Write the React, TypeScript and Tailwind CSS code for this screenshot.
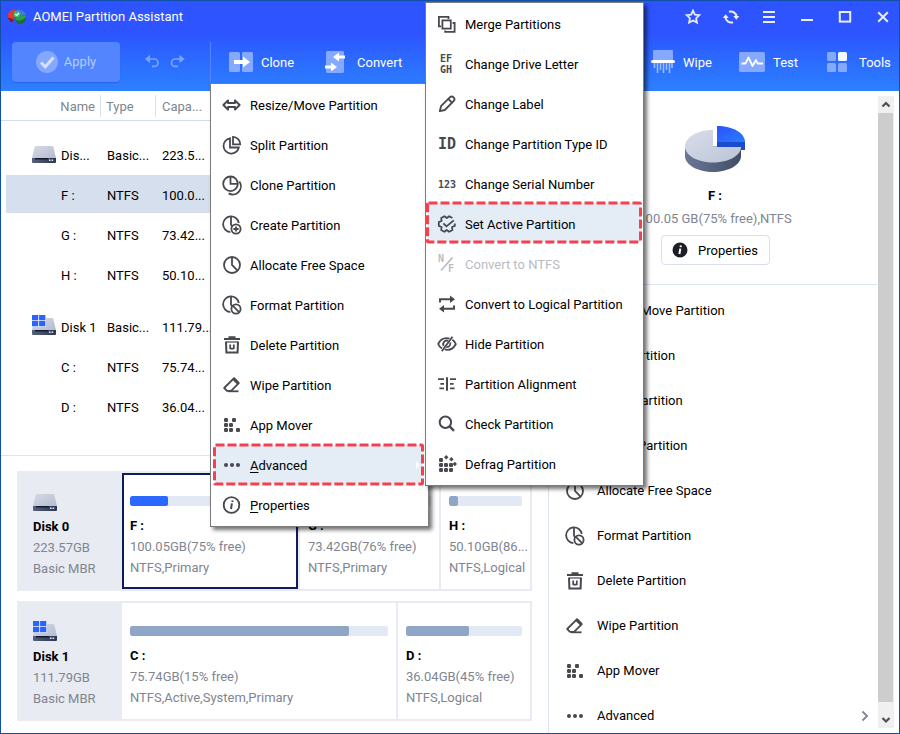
import clsx from "clsx";
import type { ReactNode } from "react";

type MenuEntry = {
  label: string;
  icon: ReactNode;
  mnemonic?: boolean;
  active?: boolean;
  disabled?: boolean;
  arrow?: boolean;
};

type Volume = {
  name: string;
  size: string;
  kind: string;
  used: number;
  selected?: boolean;
};

const Icon = ({ children }: { children: ReactNode }) => (
  <svg
    viewBox="0 0 20 20"
    className="h-5 w-5 shrink-0 overflow-visible"
    fill="none"
    stroke="currentColor"
    strokeWidth="1.8"
    aria-hidden="true"
  >
    {children}
  </svg>
);

const ResizeIcon = () => (
  <Icon>
    <path d="M6 5.4 1.4 10 6 14.6V12h7v2.6l4.6-4.6L13 5.4V8H6Z" strokeWidth="2" strokeLinejoin="round" />
  </Icon>
);

const SplitIcon = () => (
  <Icon>
    <path d="M8 3.3a7.7 7.7 0 1 0 8.8 9.2H8Z" />
    <path d="M11 1.9V9.3h7.2A7.3 7.3 0 0 0 11 1.9Z" />
  </Icon>
);

const ClonePartitionIcon = () => (
  <Icon>
    <circle cx="8.5" cy="8.8" r="7.3" />
    <path d="M8.5 1.5v7.3h7.3" />
    <path d="M17.4 6.6A8.2 8.2 0 0 1 6.6 18.4" />
  </Icon>
);

const CreateIcon = () => (
  <Icon>
    <path d="M16.8 8A7.9 7.9 0 1 0 8.4 17.2" />
    <path d="M9 1.5v8.3l1.5 2" />
    <circle cx="14" cy="14" r="4.6" />
    <path d="M14 11.4v5.2M11.4 14h5.2" />
  </Icon>
);

const AllocateIcon = () => (
  <Icon>
    <circle cx="10" cy="10" r="8" />
    <path d="M10 2v8l5.5 5.6" />
  </Icon>
);

const FormatIcon = () => (
  <Icon>
    <path d="M16.8 8A7.9 7.9 0 1 0 8.4 17.2" />
    <path d="M9 1.5v8.3l1.5 2" />
    <circle cx="14" cy="14" r="4.6" />
    <path d="m10.9 10.9 6.2 6.2" />
  </Icon>
);

const DeleteIcon = () => (
  <Icon>
    <path d="M2 4h16M6.5 2.2h7" strokeWidth="2" />
    <path d="M4 6.6 4.4 17.4h11.2L16 6.6" strokeWidth="2" />
    <path d="M4 7h12" strokeWidth="1.2" />
    <path d="M8.2 9.4v4.6M11.8 9.4v4.6M8.2 13.6h3.6" strokeWidth="1.7" />
  </Icon>
);

const EraserIcon = () => (
  <Icon>
    <path d="M5 15.8 2.2 13 12 3.2l4.8 4.9-7.7 7.7Z" strokeLinejoin="round" />
    <path d="m11.5 3.7 4.8 4.8" strokeWidth="3" />
    <path d="M6 16.3h10.500" />
  </Icon>
);

const dots = (points: number[][], size = 4) =>
  points.map(([x, y]) => (
    <rect
      key={`${x}-${y}`}
      x={x}
      y={y}
      width={size}
      height={size}
      rx="1.2"
      fill="currentColor"
      stroke="none"
    />
  ));

const MoverIcon = () => (
  <Icon>
    {dots([[2, 3], [10, 3], [2, 8], [7, 8], [2, 13], [7, 13], [14, 13]])}
  </Icon>
);

const MoreIcon = () => (
  <Icon>
    <g fill="currentColor" stroke="none">
      <circle cx="4" cy="10" r="2" />
      <circle cx="10" cy="10" r="2" />
      <circle cx="16" cy="10" r="2" />
    </g>
  </Icon>
);

const InfoIcon = () => (
  <Icon>
    <circle cx="9.5" cy="10" r="7.8" />
    <path d="M10.6 5.4 10.3 7M9.9 8.4 9 14" strokeWidth="2" />
  </Icon>
);

const MergeIcon = () => (
  <Icon>
    <path d="M11.5 5V2.9H1.9v9.4H4" />
    <rect x="5.4" y="6.4" width="8.4" height="8.2" />
    <path d="M15.600 9h2v8.900H8.200V16.400" />
  </Icon>
);

const IconText = ({ x, y, size, children }: { x: number; y: number; size: number; children: string }) => (
  <text
    x={x}
    y={y}
    fontSize={size}
    fontWeight="700"
    fill="currentColor"
    stroke="none"
    className="font-['DejaVu_Sans_Mono',monospace]"
  >
    {children}
  </text>
);

const DriveLetterIcon = () => (
  <Icon>
    <IconText x={3} y={8} size={10}>EF</IconText>
    <IconText x={3} y={19} size={10}>GH</IconText>
  </Icon>
);

const PencilIcon = () => (
  <Icon>
    <path d="m2.8 17.2 1.2-5 8.8-8.8a2.6 2.6 0 0 1 3.8 3.8l-8.8 8.8Z" strokeLinejoin="round" />
    <path d="m11.4 5 3.6 3.6" />
  </Icon>
);

const TypeIdIcon = () => (
  <Icon>
    <IconText x={1} y={15} size={15}>ID</IconText>
  </Icon>
);

const SerialIcon = () => (
  <Icon>
    <IconText x={1} y={14} size={10}>123</IconText>
  </Icon>
);

const GearIcon = () => (
  <Icon>
    <path
      d="M15.400 4 12.200 2.200 9.800 4 7.400 2.200 4.200 4l.4 3-2.800 1.100v3.800L4.600 13l-.4 3 3.200 1.800L9.800 16l2.400 1.800 3.200-1.800-.4-3 2.800-1.100V9.500"
      strokeLinejoin="round"
    />
    <path d="m6.400 9.400 3 3 7.400-6" />
  </Icon>
);

const NtfsIcon = () => (
  <Icon>
    <IconText x={1} y={8} size={10}>N</IconText>
    <path d="M15.500 3.500 4 16.500" />
    <IconText x={11} y={18} size={10}>F</IconText>
  </Icon>
);

const LogicalIcon = () => (
  <Icon>
    <path d="M3 8.500V5.200h11M17 11.500v3.300H6" strokeWidth="2" />
    <path d="m13 1.400 5 3.800-5 3.800ZM7 11l-5 3.800 5 3.800Z" fill="currentColor" stroke="none" />
  </Icon>
);

const HideIcon = () => (
  <Icon>
    <path d="M5 14.6C3 13.4 1.8 11.6 1.2 10 2.8 6.6 6 4.2 9.6 4.2c1 0 2 .2 2.9.5" />
    <path d="M15.4 5.8c1.7 1.2 2.8 2.7 3.4 4.2-1.6 3.4-4.6 5.8-8.4 5.8-1 0-1.8-.1-2.6-.4" />
    <path d="M6.7 12a3.6 3.6 0 0 1 4.4-5.2M13.3 8.4A3.6 3.6 0 0 1 9.4 13" />
    <path d="M15.500 2.800 4.800 17.200" />
  </Icon>
);

const AlignIcon = () => (
  <Icon>
    <path d="M10 3.2v13.6" strokeWidth="2" />
    <path d="M1 5.2h6M3.4 9.8H7M2.4 14.4H7M13 5.2h6M13 9.8h3.600M13 14.400h4.600" />
  </Icon>
);

const SearchIcon = () => (
  <Icon>
    <circle cx="8.400" cy="8.200" r="5.700" strokeWidth="2" />
    <path d="m12.400 12.200 4.600 4.600" strokeWidth="2.400" />
  </Icon>
);

const DefragIcon = () => (
  <Icon>
    {dots([[2, 4], [2, 9], [7, 9], [12, 9], [2, 14], [7, 14], [12, 14]])}
    <path
      d="m9.200 1 2.200 2.200-2.200 2.200L7 3.200ZM14.400 3l2.200 2.200-2.200 2.200-2.200-2.200ZM17.800 7.800l2.200 2.200-2.200 2.200-2.200-2.200Z"
      fill="currentColor"
      stroke="none"
    />
  </Icon>
);

const partitionMenu: MenuEntry[] = [
  { label: "Resize/Move Partition", icon: <ResizeIcon /> },
  { label: "Split Partition", icon: <SplitIcon /> },
  { label: "Clone Partition", icon: <ClonePartitionIcon /> },
  { label: "Create Partition", icon: <CreateIcon /> },
  { label: "Allocate Free Space", icon: <AllocateIcon /> },
  { label: "Format Partition", icon: <FormatIcon /> },
  { label: "Delete Partition", icon: <DeleteIcon /> },
  { label: "Wipe Partition", icon: <EraserIcon /> },
  { label: "App Mover", icon: <MoverIcon /> },
  { label: "Advanced", icon: <MoreIcon />, mnemonic: true, active: true, arrow: true },
  { label: "Properties", icon: <InfoIcon />, mnemonic: true },
];

const advancedMenu: MenuEntry[] = [
  { label: "Merge Partitions", icon: <MergeIcon /> },
  { label: "Change Drive Letter", icon: <DriveLetterIcon /> },
  { label: "Change Label", icon: <PencilIcon /> },
  { label: "Change Partition Type ID", icon: <TypeIdIcon /> },
  { label: "Change Serial Number", icon: <SerialIcon /> },
  { label: "Set Active Partition", icon: <GearIcon />, active: true },
  { label: "Convert to NTFS", icon: <NtfsIcon />, disabled: true },
  { label: "Convert to Logical Partition", icon: <LogicalIcon /> },
  { label: "Hide Partition", icon: <HideIcon /> },
  { label: "Partition Alignment", icon: <AlignIcon /> },
  { label: "Check Partition", icon: <SearchIcon /> },
  { label: "Defrag Partition", icon: <DefragIcon /> },
];

const tableGroups = [
  {
    disk: ["Dis...", "Basic...", "223.5..."],
    system: false,
    volumes: [
      ["F :", "NTFS", "100.0..."],
      ["G :", "NTFS", "73.42..."],
      ["H :", "NTFS", "50.10..."],
    ],
  },
  {
    disk: ["Disk 1", "Basic...", "111.79..."],
    system: true,
    volumes: [
      ["C :", "NTFS", "75.74..."],
      ["D :", "NTFS", "36.04..."],
    ],
  },
];

const disks: { name: string; size: string; system: boolean; columns: string; volumes: Volume[] }[] = [
  {
    name: "Disk 0",
    size: "223.57GB",
    system: false,
    columns: "grid-cols-[176fr_139fr_89fr]",
    volumes: [
      { name: "F :", size: "100.05GB(75% free)", kind: "NTFS,Primary", used: 24, selected: true },
      { name: "G :", size: "73.42GB(76% free)", kind: "NTFS,Primary", used: 24 },
      { name: "H :", size: "50.10GB(86...", kind: "NTFS,Logical", used: 13 },
    ],
  },
  {
    name: "Disk 1",
    size: "111.79GB",
    system: true,
    columns: "grid-cols-[274fr_132fr]",
    volumes: [
      { name: "C :", size: "75.74GB(15% free)", kind: "NTFS,Active,System,Primary", used: 85 },
      { name: "D :", size: "36.04GB(45% free)", kind: "NTFS,Logical", used: 54 },
    ],
  },
];

function DiskIcon({ system }: { system: boolean }) {
  return (
    <svg viewBox="0 0 24 20" className="h-5 w-6 shrink-0" aria-hidden="true">
      <defs>
        <linearGradient id="diskTop" x1="0" y1="0" x2="1" y2="1">
          <stop offset="0" stopColor="#d5dae5" />
          <stop offset="1" stopColor="#b4bccf" />
        </linearGradient>
        <linearGradient id="diskBase" x1="0" y1="0" x2="1" y2="0">
          <stop offset="0" stopColor="#56617e" />
          <stop offset="1" stopColor="#2c3552" />
        </linearGradient>
      </defs>
      <path d="M4.2 3h15.6c.8 0 1.4.5 1.6 1.3L24 15H0L2.6 4.3C2.800 3.500 3.400 3 4.200 3Z" fill="url(#diskTop)" />
      <path d="M0 15h24v4a1 1 0 0 1-1 1H1a1 1 0 0 1-1-1Z" fill="url(#diskBase)" />
      <path d="M3 15h13v1.500H3Z" fill="#151a2b" />
      <path d="M17 16.500h1.600v1.500H17ZM19.600 16.500h1.600v1.500h-1.600Z" fill="#dfe6f5" />
      {system && (
        <>
          <path d="M0 0h14v12H0Z" fill="#eef2f9" />
          <path d="M0 0h6.200v5.200H0ZM7.100 0h6.200v5.200H7.100ZM0 6.100h6.200v5.200H0ZM7.100 6.100h6.200v5.200H7.100Z" fill="#2b63ff" />
        </>
      )}
    </svg>
  );
}

const AppLogo = () => (
  <svg viewBox="0 0 18 16" className="h-4 w-[18px]" aria-hidden="true">
    <path d="M0 6C0 2.500 4 .5 8 1l1 5-3 3-1 4C2 12 0 10 0 7Z" fill="#e23a2e" />
    <path d="M0 8.500 5.500 10 5 13.500C2 12.500 0 11 0 8.500Z" fill="#8e1c22" />
    <path d="M9 .5c4 0 8.500 2 9 5.500l-5 1-4-2Z" fill="#3f7fc4" />
    <path d="M6.500 9.500 13 7h5v4c-1 2.500-4 4-8 4.500Z" fill="#1d6b35" />
    <path d="M6.500 9.500 13 7h5c0 2-3.500 4.500-8 4.800Z" fill="#2f9e4c" />
    <circle cx="9" cy="5.200" r="3.200" fill="#2fc46c" />
    <path d="m7.200 5.100 1.400 1.400L11 4" fill="none" stroke="#fff" strokeWidth="1.200" />
  </svg>
);

const windowButtons = [
  {
    label: "Favorites",
    shape: <path d="m8 1.600 1.900 4 4.400.6-3.200 3 .8 4.400L8 11.500l-3.900 2.100.8-4.400-3.200-3 4.400-.6Z" strokeWidth="1.800" />,
  },
  {
    label: "Refresh",
    shape: (
      <>
        <path d="M6 2.800a5.600 5.600 0 0 1 7.500 4.700M10 13.200a5.600 5.600 0 0 1-7.500-4.700" strokeWidth="2" />
        <path d="M10.300 7h6L13.300 10.800ZM-.3 9h6L2.700 5.200Z" fill="currentColor" stroke="none" />
      </>
    ),
  },
  { label: "Menu", shape: <path d="M2 3h12M2 8h12M2 13h12" strokeWidth="2" /> },
  { label: "Minimize", shape: <path d="M2 11h12" strokeWidth="2" /> },
  { label: "Maximize", shape: <rect x="2.800" y="3" width="10.400" height="9.600" strokeWidth="2" /> },
  { label: "Close", shape: <path d="m3.200 3.200 9.600 9.600M12.800 3.200l-9.600 9.600" strokeWidth="2" /> },
];

function ToolButton({ label, wide, children }: { label: string; wide?: boolean; children: ReactNode }) {
  return (
    <button type="button" className="flex items-center gap-2 text-white">
      <svg
        viewBox={wide ? "0 0 26 24" : "0 0 24 24"}
        className={clsx("h-6 shrink-0", wide ? "w-[26px]" : "w-6")}
        aria-hidden="true"
      >
        {children}
      </svg>
      <span className="pt-[2px]">{label}</span>
    </button>
  );
}

function Header() {
  return (
    <header className="h-[90px] shrink-0 bg-linear-to-b from-[#2d54ff] from-35% to-[#2e80ff] text-white">
      <div className="flex h-8 items-center justify-between pr-2 pl-[7px]">
        <div className="flex items-center gap-[7px]">
          <AppLogo />
          <h1>AOMEI Partition Assistant</h1>
        </div>
        <div className="flex gap-[22px]">
          {windowButtons.map(({ label, shape }) => (
            <button key={label} type="button" aria-label={label} className="h-4 w-4 text-[#e8edff]">
              <svg viewBox="0 0 16 16" className="overflow-visible" fill="none" stroke="currentColor">
                {shape}
              </svg>
            </button>
          ))}
        </div>
      </div>
      <div className="flex h-[58px] items-center justify-between pr-[11px] pl-[11px]">
        <div className="flex items-center">
          <button
            type="button"
            className="flex h-10 w-[108px] items-center justify-center gap-[6px] rounded bg-[#5285ff] text-[#b4cdff] shadow-[0_1px_1px_#2c62f0]"
          >
            <svg viewBox="0 0 22 22" className="h-[22px] w-[22px]" fill="none" aria-hidden="true">
              <circle cx="11" cy="11" r="11" fill="#85a8ff" />
              <path d="m5 11.500 4.300 4.300L17.500 6.500" stroke="#d4e1ff" strokeWidth="3" />
            </svg>
            Apply
          </button>
          <div className="flex gap-[10px] pl-6 text-[#7da3ff]">
            <button type="button" aria-label="Undo" className="h-4 w-4">
              <svg viewBox="0 0 16 16" fill="none" stroke="currentColor" strokeWidth="1.700">
                <path d="M4 5h6.300a3.700 3.700 0 0 1 0 7.400H8" />
                <path d="m6 .9-5.200 4.100L6 9.100Z" fill="currentColor" stroke="none" />
              </svg>
            </button>
            <button type="button" aria-label="Redo" className="h-4 w-4">
              <svg viewBox="0 0 16 16" fill="none" stroke="currentColor" strokeWidth="1.700">
                <path d="M11 5H5.200a3.700 3.700 0 0 0 0 7.400H8" />
                <path d="m9.500.9 5.200 4.100-5.200 4.100Z" fill="currentColor" stroke="none" />
              </svg>
            </button>
          </div>
          <div className="ml-6 h-10 w-px bg-[#5585ff]" />
          <nav className="ml-[18px] grid grid-cols-[96px_auto]">
            <ToolButton label="Clone">
              <rect y="2" width="11" height="20" rx="1.500" fill="#85a9ff" />
              <rect x="13" y="2" width="11" height="20" rx="1.500" fill="#85a9ff" />
              <path d="M5 10h9V6.500l7 5.500-7 5.500V14H5Z" fill="#fff" />
            </ToolButton>
            <ToolButton label="Convert">
              <rect x="1" y="1" width="18" height="22" rx="1.500" fill="#85a9ff" />
              <path d="M20 5.500h-6V2.500L8 7l6 4.500v-3h6ZM0 15.500h6v-3l6 4.500-6 4.500v-3H0Z" fill="#fff" />
            </ToolButton>
          </nav>
        </div>
        <nav className="grid grid-cols-[88px_88px_61px]">
          <ToolButton label="Wipe">
            <path d="M3 0h18a1 1 0 0 1 1 1v9H2V1a1 1 0 0 1 1-1Z" fill="#85a9ff" />
            <path
              d="M3.500 13v5M6.500 13v10M9.500 13v7M12.500 13v10M15.500 13v7M18.500 13v10M21 13v5"
              stroke="#9dbbff"
              strokeWidth="1.600"
            />
            <rect y="10" width="24" height="3" rx="1.500" fill="#fff" />
          </ToolButton>
          <ToolButton label="Test" wide>
            <rect y="2" width="26" height="20" rx="1.500" fill="#85a9ff" />
            <path
              d="M2.500 13.500h4l3-6 4 8.500 3.500-6 1.500 3.500h5.500"
              fill="none"
              stroke="#fff"
              strokeWidth="1.800"
              strokeLinejoin="round"
            />
          </ToolButton>
          <ToolButton label="Tools">
            <rect y="2" width="9" height="9" rx="1.500" fill="#85a9ff" />
            <rect x="11" y="2" width="9" height="9" rx="1.500" fill="#f4f7ff" />
            <rect y="13" width="9" height="9" rx="1.500" fill="#85a9ff" />
            <rect x="11" y="13" width="9" height="9" rx="1.500" fill="#85a9ff" />
          </ToolButton>
        </nav>
      </div>
    </header>
  );
}

function PartitionTable() {
  return (
    <div className="flex-1 border-b border-[#dde4f0]">
      <table className="w-full table-fixed border-separate border-spacing-0 text-left">
        <colgroup>
          <col className="w-[5px]" />
          <col className="w-[94px]" />
          <col className="w-[55px]" />
          <col className="w-[55px]" />
          <col />
        </colgroup>
        <thead className="text-[#808591]">
          <tr className="h-[30px]">
            <th className="border-b border-[#d3dcea] p-0" />
            <th className="border-b border-[#d3dcea] p-0 pr-[5px] pt-[2px] text-right font-normal">Name</th>
            <th className="border-b border-[#d3dcea] p-0 font-normal">
              <div className="border-l border-[#dbe2ee] pt-[2px] pl-[5px]">Type</div>
            </th>
            <th className="border-b border-[#d3dcea] p-0 font-normal">
              <div className="border-l border-[#dbe2ee] pt-[2px] pl-[6px]">Capa...</div>
            </th>
            <th className="border-b border-[#d3dcea] p-0" />
          </tr>
        </thead>
        <tbody>
          {tableGroups.map(({ disk, system, volumes }, index) => [
            <tr key={disk[0]} className={clsx("align-bottom", index === 0 ? "h-[54px]" : "h-[52px]")}>
              <td className="p-0" />
              <td className="p-0">
                <div className="flex h-10 items-center gap-[5px] pt-[2px] pl-[26px]">
                  <span className="mb-[6px]">
                    <DiskIcon system={system} />
                  </span>
                  {disk[0]}
                </div>
              </td>
              <td className="p-0">
                <div className="flex h-10 items-center pt-[2px] pl-[7px]">{disk[1]}</div>
              </td>
              <td className="p-0">
                <div className="flex h-10 items-center pt-[2px] pl-[7px]">{disk[2]}</div>
              </td>
              <td className="p-0" />
            </tr>,
            ...volumes.map(([name, type, capacity]) => {
              const cell = clsx("border-b-2 border-white bg-clip-padding p-0 pt-[3px]", name === "F :" && "bg-[#d5dfee]");
              return (
                <tr key={name} className="h-10">
                  <td className="p-0" />
                  <td className={cell}>
                    <div className="pl-[55px]">{name}</div>
                  </td>
                  <td className={cell}>
                    <div className="pl-[7px]">{type}</div>
                  </td>
                  <td className={cell}>
                    <div className="pl-[7px]">{capacity}</div>
                  </td>
                  <td className={cell} />
                </tr>
              );
            }),
          ])}
        </tbody>
      </table>
    </div>
  );
}

function VolumeCard({ name, size, kind, used, selected }: Volume) {
  return (
    <div
      className={clsx(
        "min-w-0 overflow-hidden bg-white",
        selected ? "border-2 border-[#101b5c] px-[6px] pt-[21px]" : "px-2 pt-[23px]",
      )}
    >
      <div className="mb-[9px] h-[10px] overflow-hidden rounded-xs bg-[#e2e9f4]">
        <div
          className={clsx("h-full rounded-xs", selected ? "bg-[#2b68ff]" : "bg-[#90a6c6]")}
          style={{ width: `${used}%` }}
        />
      </div>
      <p className="leading-[21px] font-bold">{name}</p>
      <p className="leading-[21px] whitespace-nowrap text-[#808591]">{size}</p>
      <p className="leading-[21px] whitespace-nowrap text-[#808591]">{kind}</p>
    </div>
  );
}

function DiskPanels() {
  return (
    <div className="flex flex-col gap-[10px] px-4 pt-[15px] pb-3">
      {disks.map(({ name, size, system, columns, volumes }) => (
        <section key={name} className="flex h-[120px] bg-[#e8ebf2]">
          <div className="w-[105px] shrink-0 pt-5 pl-4">
            <DiskIcon system={system} />
            <p className="mt-[5px] leading-[21px] font-bold">{name}</p>
            <p className="leading-[21px] text-[#808591]">{size}</p>
            <p className="leading-[21px] text-[#808591]">Basic MBR</p>
          </div>
          <div className={clsx("grid min-w-0 flex-1 gap-[2px] py-[2px] pr-[2px]", columns)}>
            {volumes.map((volume) => (
              <VolumeCard key={volume.name} {...volume} />
            ))}
          </div>
        </section>
      ))}
    </div>
  );
}

function UsagePie() {
  return (
    <svg viewBox="0 0 60 46" className="h-[46px] w-[60px]" aria-hidden="true">
      <defs>
        <linearGradient id="pieTop" x1="0" y1="0" x2="1" y2="1">
          <stop offset="0" stopColor="#d8dde9" />
          <stop offset="1" stopColor="#bcc4d6" />
        </linearGradient>
        <linearGradient id="pieSide" x1="0" y1="0" x2="1" y2="0">
          <stop offset="0" stopColor="#6b7896" />
          <stop offset="1" stopColor="#414c67" />
        </linearGradient>
        <linearGradient id="sliceTop" x1="0" y1="0" x2="1" y2="1">
          <stop offset="0" stopColor="#2b52ff" />
          <stop offset="1" stopColor="#2b7dff" />
        </linearGradient>
      </defs>
      <path d="M0 20v10c0 9 13 16 28 16s28-7 28-16V21Z" fill="url(#pieSide)" />
      <path d="M28 4v17h28c0 9-13 15.500-28 15.500S0 29.500 0 20.500 12 4 28 4Z" fill="url(#pieTop)" />
      <path d="M32 16h28v8H56v-3H32Z" fill="#1a4ccd" />
      <path d="M32 0c16 0 28 7 28 16H32Z" fill="url(#sliceTop)" />
    </svg>
  );
}

function Sidebar() {
  return (
    <aside className="flex w-[351px] shrink-0 border-l border-[#dde4f0]">
      <div className="flex min-w-0 flex-1 flex-col overflow-hidden">
        <div className="flex shrink-0 flex-col items-center border-b border-[#dbe2f0] pt-[35px] pb-[19px] pl-1">
          <UsagePie />
          <p className="mt-[13px] leading-[21px] font-bold">F :</p>
          <p className="mt-[2px] leading-[21px] text-[#808591]">100.05 GB(75% free),NTFS</p>
          <button
            type="button"
            className="mt-[6px] flex h-[30px] w-[109px] items-center justify-center gap-[10px] rounded border border-[#d9dfee]"
          >
            <svg viewBox="0 0 16 16" className="h-4 w-4" aria-hidden="true">
              <circle cx="8" cy="8" r="7.500" fill="#1d1f24" />
              <path d="m8.900 3.500-.3 1.700M8.300 6.600 7.400 12" stroke="#fff" strokeWidth="2" />
            </svg>
            <span className="pt-[2px]">Properties</span>
          </button>
        </div>
        <div className="pt-[3px]">
          {partitionMenu.slice(0, -1).map(({ label, icon, arrow }) => (
            <button key={label} type="button" className="flex h-[45px] w-full items-center gap-3 pr-2 pl-4 text-left">
              <span className="text-[#47494f]">{icon}</span>
              <span className="flex-1">{label}</span>
              {arrow && (
                <svg viewBox="0 0 8 12" className="h-3 w-2" fill="none" stroke="#858a96" strokeWidth="2">
                  <path d="m1.500 1.500 4.500 4.500-4.500 4.500" />
                </svg>
              )}
            </button>
          ))}
        </div>
      </div>
      <div className="my-[5px] mr-[5px] ml-px flex w-4 shrink-0 flex-col bg-[#f0f0f0]">
        <svg viewBox="0 0 16 17" className="h-[17px] w-4" fill="none" stroke="#505050" strokeWidth="2.200">
          <path d="m4.500 10.500 3.500-3.500 3.500 3.500" />
        </svg>
        <div className="mr-px flex-1 bg-[#cdcdcd]" />
        <svg viewBox="0 0 16 26" className="h-[26px] w-4" fill="none" stroke="#505050" strokeWidth="2.200">
          <path d="m4.500 16 3.500 3.500 3.500-3.500" />
        </svg>
      </div>
    </aside>
  );
}

function PopupMenu({
  label,
  entries,
  className,
  marker,
}: {
  label: string;
  entries: MenuEntry[];
  className: string;
  marker: { x: number; y: number; width: number };
}) {
  return (
    <div
      role="menu"
      aria-label={label}
      className={clsx(
        "absolute w-[219px] border border-[#7b7b7b] bg-white py-px shadow-[3px_3px_4px_rgba(0,0,0,0.55)]",
        className,
      )}
    >
      {entries.map(({ label, icon, mnemonic, active, disabled, arrow }) => (
        <button
          key={label}
          type="button"
          role="menuitem"
          disabled={disabled}
          className="relative flex h-10 w-full items-center gap-2 pl-[11px] text-left"
        >
          {active && (
            <svg className="absolute inset-0 h-full w-full overflow-visible" aria-hidden="true">
              <rect
                {...marker}
                height="39"
                rx="1"
                fill="#e4ecf5"
                stroke="#f4414f"
                strokeWidth="3"
                strokeDasharray="9 3"
              />
            </svg>
          )}
          <span className={clsx("relative", disabled ? "text-[#b9bcc4]" : "text-[#47494f]")}>{icon}</span>
          <span className={clsx("relative pt-[2px] whitespace-nowrap", disabled && "text-[#b9bcc4]")}>
            {mnemonic ? (
              <>
                <u className="underline-offset-2">{label[0]}</u>
                {label.slice(1)}
              </>
            ) : (
              label
            )}
          </span>
          {arrow && (
            <svg viewBox="0 0 4 8" className="absolute right-2 h-2 w-1" aria-hidden="true">
              <path d="M0 0v8l4-4Z" fill="#fff" />
            </svg>
          )}
        </button>
      ))}
    </div>
  );
}

export default function App() {
  return (
    <div className="relative flex h-screen flex-col overflow-hidden border border-[#0f4fa8] bg-white font-['Roboto',sans-serif] text-[13px] leading-5 text-black">
      <Header />
      <main className="flex min-h-0 flex-1">
        <div className="flex min-w-0 flex-1 flex-col">
          <PartitionTable />
          <DiskPanels />
        </div>
        <Sidebar />
      </main>
      <PopupMenu
        label="Partition"
        entries={partitionMenu}
        className="top-[82px] left-[209px]"
        marker={{ x: 3.5, y: 0, width: 208 }}
      />
      <PopupMenu
        label="Advanced"
        entries={advancedMenu}
        className="top-px left-[424px]"
        marker={{ x: 1.5, y: -1, width: 213 }}
      />
    </div>
  );
}
